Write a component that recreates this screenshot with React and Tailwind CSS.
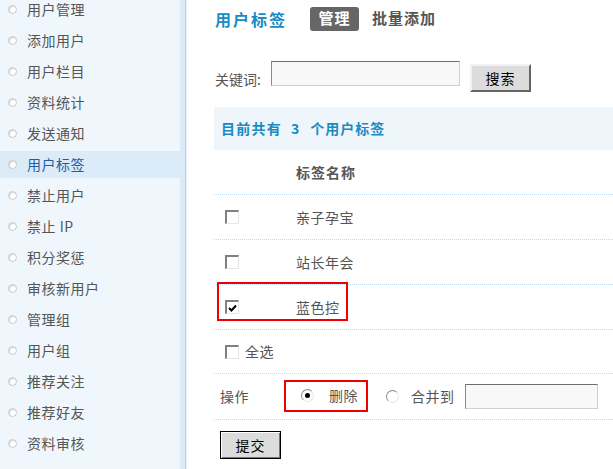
import React from "react";

const FONT = { fontFamily: '"Noto Sans CJK SC", "Noto Sans", sans-serif' };

const menu = [
  "用户管理", "添加用户", "用户栏目", "资料统计", "发送通知", "用户标签", "禁止用户", "禁止 IP",
  "积分奖惩", "审核新用户", "管理组", "用户组", "推荐关注", "推荐好友", "资料审核",
];

function Bullet() {
  return (
    <span className="w-[9px] h-[9px] rounded-full border border-[#c8c8c8] bg-white shrink-0 shadow-[inset_1px_1px_1px_#d8d8d8]" />
  );
}

function Checkbox({ checked }) {
  return (
    <span className="relative w-[14px] h-[14px] bg-white border-t-2 border-l-2 border-r border-b border-t-[#808080] border-l-[#808080] border-r-[#e6e6e6] border-b-[#e6e6e6] shrink-0 flex items-center justify-center">
      {checked && (
        <svg width="9" height="8" viewBox="0 0 9 8" className="block">
          <path d="M1 4 L3.5 6.5 L8 1.5" stroke="#000" strokeWidth="2" fill="none" />
        </svg>
      )}
    </span>
  );
}

function Radio({ checked }) {
  return (
    <span className="relative w-[13px] h-[13px] rounded-full bg-white border border-t-[#8a8a8a] border-l-[#8a8a8a] border-r-[#e4e4e4] border-b-[#e4e4e4] shrink-0 flex items-center justify-center">
      {checked && <span className="w-[5px] h-[5px] rounded-full bg-black" />}
    </span>
  );
}

export default function App() {
  return (
    <div className="w-[613px] h-[469px] overflow-hidden flex bg-white text-[14px] text-[#555]" style={FONT}>
      {/* Sidebar */}
      <div className="flex shrink-0 h-full">
        <div className="w-[180px] bg-[#eff7fc] -mt-[6px] flex flex-col">
          {menu.map((m, i) => (
            <div key={i} className="h-[31px] flex items-center">
              <div
                className={
                  "w-full h-[27px] flex items-center gap-[10px] pl-[8px] " +
                  (i === 5 ? "bg-[#dbebf8] text-[#1d5ea6]" : "text-[#555]")
                }
              >
                <Bullet />
                <span className="tracking-[0.5px] whitespace-pre">{m}</span>
              </div>
            </div>
          ))}
        </div>
        <div className="w-[6px] bg-[#dbeaf7] border-r border-[#b8d2ea]" />
        <div className="w-[1px] bg-[#e8f1f9]" />
      </div>

      {/* Main */}
      <div className="flex-1 pl-[27px] flex flex-col">
        {/* header */}
        <div className="h-[36px] flex items-center pt-[1px]">
          <span className="w-[96px] pl-[1px] text-[16px] font-bold text-[#1b8ac2] tracking-[2px]">用户标签</span>
          <span className="h-[24px] w-[49px] rounded-[3px] bg-[#666] text-white font-bold text-[15px] tracking-[1px] flex items-center justify-center">管理</span>
          <span className="ml-[13px] font-bold text-[15px] text-[#555] tracking-[1px]">批量添加</span>
        </div>

        {/* search */}
        <div className="flex items-start mt-[25px] h-[46px]">
          <span className="mt-[8px] ml-[1px] w-[56px] text-[#555]">关键词:</span>
          <span className="w-[189px] h-[25px] bg-[#f8f8f8] border border-t-[#6e6e6e] border-l-[#8a8a8a] border-r-[#cfcfcf] border-b-[#cfcfcf]" />
          <span className="ml-[10px] mt-[3px] w-[61px] h-[28px] bg-[#dcdcdc] border-2 border-t-[#f2f2f2] border-l-[#f2f2f2] border-r-[#666] border-b-[#666] text-black flex items-center justify-center tracking-[1px]">搜索</span>
        </div>

        {/* info bar */}
        <div className="h-[43px] bg-[#eef6fb] flex items-center pl-[7px] font-bold text-[14px] text-[#1b8ac2] whitespace-pre">
          <span className="tracking-[1.25px]">目前共有</span>
          <span className="ml-[9px]">3</span>
          <span className="ml-[11px] tracking-[1px]">个用户标签</span>
        </div>

        {/* table */}
        <div className="flex flex-col">
          <div className="h-[45px] flex items-center border-b border-dotted border-[#b9dcf2]">
            <span className="ml-[82px] font-bold text-[#555] tracking-[1px]">标签名称</span>
          </div>
          {["亲子孕宝", "站长年会", "蓝色控"].map((t, i) => (
            <div key={t} className="relative h-[45px] flex items-center border-b border-dotted border-[#b9dcf2]">
              <span className="w-[82px] pl-[11px] flex">
                <Checkbox checked={i === 2} />
              </span>
              <span className="text-[#555] tracking-[0.5px]">{t}</span>
              {i === 2 && (
                <span className="absolute left-[3px] top-[-3px] w-[131px] h-[39px] border-2 border-[#f20000]" />
              )}
            </div>
          ))}
          <div className="h-[44px] flex items-center border-b border-dotted border-[#b9dcf2]">
            <span className="pl-[11px] flex">
              <Checkbox />
            </span>
            <span className="ml-[6px] tracking-[0.5px]">全选</span>
          </div>
          <div className="h-[46px] flex items-center border-b border-dotted border-[#b9dcf2]">
            <span className="ml-[6px] w-[64px] tracking-[0.5px]">操作</span>
            <span className="flex items-center h-[32px] w-[84px] border-2 border-[#f20000] pl-[15px] mt-[-2px]">
              <Radio checked />
              <span className="ml-[15px] tracking-[0.5px]">删除</span>
            </span>
            <span className="ml-[18px] flex"><Radio /></span>
            <span className="ml-[12px] tracking-[0.5px]">合并到</span>
            <span className="ml-[10px] w-[133px] h-[25px] bg-[#f8f8f8] border border-t-[#6e6e6e] border-l-[#8a8a8a] border-r-[#cfcfcf] border-b-[#cfcfcf]" />
          </div>
          <div className="pt-[11px] pl-[6px]">
            <span className="w-[61px] h-[28px] bg-[#dcdcdc] border border-black text-black flex items-center justify-center tracking-[1px] shadow-[inset_1px_1px_0_#fff,inset_-1px_-1px_0_#777]">提交</span>
          </div>
        </div>
      </div>
    </div>
  );
}
